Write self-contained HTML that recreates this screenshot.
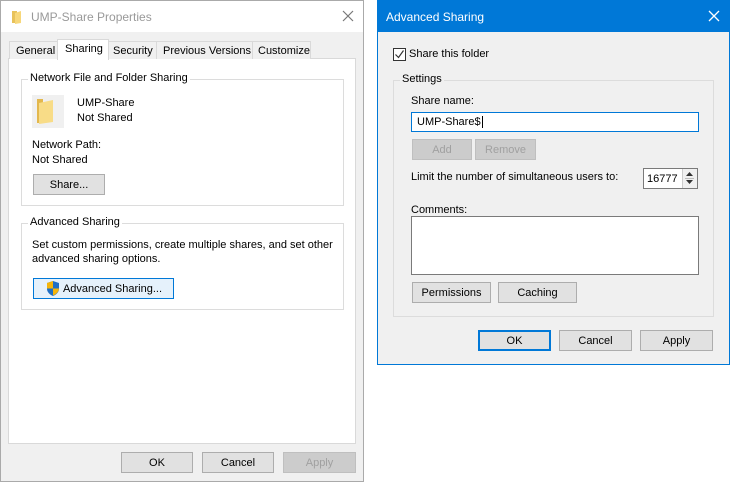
<!DOCTYPE html>
<html><head><style>
*{box-sizing:border-box;margin:0;padding:0}
body{width:731px;height:486px;background:#fff;position:relative;font-family:"Liberation Sans",sans-serif;font-size:11px;color:#000;overflow:hidden}
.a{position:absolute;white-space:nowrap}
.btn{position:absolute;background:#e1e1e1;border:1px solid #adadad;text-align:center;line-height:20px;font-size:11px;white-space:nowrap}
.dis{color:#a0a0a0;background:#cccccc;border-color:#bfbfbf}
.grp{position:absolute;border:1px solid #dcdcdc}
.lg{position:absolute;top:-8px;left:8px;padding:0 2px;font-size:11px;white-space:nowrap}
</style></head><body>

<div class="a" style="left:0;top:0;width:364px;height:482px;border:1px solid #aaa;background:#f0f0f0"></div>
<div class="a" style="left:1px;top:1px;width:362px;height:31px;background:#fff"></div>
<svg class="a" style="left:11px;top:10px" width="12" height="14"><path d="M1 1h5v12H1z" fill="#e8c25a"/><path d="M4 3l6-2v12l-6 1z" fill="#f7d77a"/></svg>
<div class="a" style="left:31px;top:10px;font-size:12px;color:#999">UMP-Share Properties</div>
<svg class="a" style="left:342px;top:10px" width="12" height="12"><path d="M1 1L11 11M11 1L1 11" stroke="#777" stroke-width="1.2"/></svg>

<div class="a" style="left:8px;top:58px;width:348px;height:386px;background:#fff;border:1px solid #d9d9d9"></div>
<div class="a" style="left:9px;top:41px;width:49px;height:18px;border:1px solid #d9d9d9;border-bottom:none;background:#f0f0f0;padding:3px 0 0 6px">General</div>
<div class="a" style="left:57px;top:39px;width:52px;height:21px;border:1px solid #d9d9d9;border-bottom:none;background:#fff;padding:3px 0 0 7px">Sharing</div>
<div class="a" style="left:108px;top:41px;width:49px;height:18px;border:1px solid #d9d9d9;border-bottom:none;background:#f0f0f0;padding:3px 0 0 4px">Security</div>
<div class="a" style="left:156px;top:41px;width:97px;height:18px;border:1px solid #d9d9d9;border-bottom:none;background:#f0f0f0;padding:3px 0 0 6px">Previous Versions</div>
<div class="a" style="left:252px;top:41px;width:59px;height:18px;border:1px solid #d9d9d9;border-bottom:none;background:#f0f0f0;padding:3px 0 0 5px">Customize</div>

<div class="grp" style="left:21px;top:79px;width:323px;height:127px"><span class="lg" style="background:#fff;left:6px">Network File and Folder Sharing</span></div>
<div class="a" style="left:32px;top:95px;width:32px;height:33px;background:#f0f0f0"></div>
<svg class="a" style="left:36px;top:97px" width="20" height="29"><path d="M1 2h6v24H1z" fill="#e3b84e"/><path d="M3 6l14-3v22l-14 2z" fill="#f8dc87"/></svg>
<div class="a" style="left:77px;top:96px;line-height:15px">UMP-Share<br>Not Shared</div>
<div class="a" style="left:32px;top:138px;line-height:15px">Network Path:<br>Not Shared</div>
<div class="btn" style="left:33px;top:174px;width:72px;height:21px">Share...</div>

<div class="grp" style="left:21px;top:223px;width:323px;height:87px"><span class="lg" style="background:#fff;left:6px">Advanced Sharing</span></div>
<div class="a" style="left:32px;top:238px;line-height:14px">Set custom permissions, create multiple shares, and set other<br>advanced sharing options.</div>
<div class="btn" style="left:33px;top:278px;width:141px;height:21px;background:#e5f1fb;border-color:#0078d7;padding-left:18px">Advanced Sharing...</div>
<svg class="a" style="left:46px;top:280px" width="14" height="17"><path d="M7 1L1 3v6c0 3 3 6 6 7 3-1 6-4 6-7V3z" fill="#1f6fc5"/><path d="M7 1v7.5H1V3zM7 8.5h6c0 3-3 6-6 7z" fill="#f5b50a"/></svg>

<div class="btn" style="left:121px;top:452px;width:72px;height:21px">OK</div>
<div class="btn" style="left:202px;top:452px;width:72px;height:21px">Cancel</div>
<div class="btn dis" style="left:283px;top:452px;width:73px;height:21px">Apply</div>

<div class="a" style="left:377px;top:0;width:353px;height:365px;border:1px solid #0078d7;background:#f0f0f0"></div>
<div class="a" style="left:377px;top:0;width:353px;height:32px;background:#0078d7"></div>
<div class="a" style="left:386px;top:10px;color:#fff;font-size:12px">Advanced Sharing</div>
<svg class="a" style="left:708px;top:10px" width="12" height="12"><path d="M1 1L11 11M11 1L1 11" stroke="#fff" stroke-width="1.3"/></svg>

<div class="a" style="left:393px;top:48px;width:13px;height:13px;border:1px solid #333;background:#fff"></div>
<svg class="a" style="left:394px;top:49px" width="11" height="11"><path d="M1.5 5.5l3 3 5-7" stroke="#333" stroke-width="1.2" fill="none"/></svg>
<div class="a" style="left:409px;top:48px">Share this folder</div>

<div class="grp" style="left:393px;top:80px;width:321px;height:237px"><span class="lg" style="background:#f0f0f0;left:6px">Settings</span></div>
<div class="a" style="left:411px;top:95px">Share name:</div>
<div class="a" style="left:411px;top:112px;width:288px;height:20px;border:1px solid #0078d7;background:#fff;padding:3px 0 0 5px">UMP-Share$<span style="border-left:1px solid #000;margin-left:1px"></span></div>
<div class="btn dis" style="left:412px;top:139px;width:60px;height:21px">Add</div>
<div class="btn dis" style="left:475px;top:139px;width:61px;height:21px">Remove</div>
<div class="a" style="left:411px;top:171px">Limit the number of simultaneous users to:</div>
<div class="a" style="left:643px;top:168px;width:55px;height:21px;border:1px solid #7a7a7a;background:#fff"></div>
<div class="a" style="left:647px;top:173px;width:34px;overflow:hidden">16777</div>
<div class="a" style="left:682px;top:169px;width:15px;height:19px;background:#f0f0f0;border-left:1px solid #ccc"></div>
<svg class="a" style="left:685px;top:171px" width="9" height="15"><path d="M1 5l3.5-4 3.5 4zM1 9l3.5 4 3.5-4z" fill="#333"/><path d="M0 7.5h9" stroke="#bbb"/></svg>
<div class="a" style="left:411px;top:204px">Comments:</div>
<div class="a" style="left:411px;top:216px;width:288px;height:59px;border:1px solid #7a7a7a;background:#fff"></div>
<div class="btn" style="left:412px;top:282px;width:79px;height:21px">Permissions</div>
<div class="btn" style="left:498px;top:282px;width:79px;height:21px">Caching</div>

<div class="btn" style="left:478px;top:330px;width:73px;height:21px;border:2px solid #0078d7;line-height:18px">OK</div>
<div class="btn" style="left:559px;top:330px;width:73px;height:21px">Cancel</div>
<div class="btn" style="left:640px;top:330px;width:73px;height:21px">Apply</div>
</body></html>
